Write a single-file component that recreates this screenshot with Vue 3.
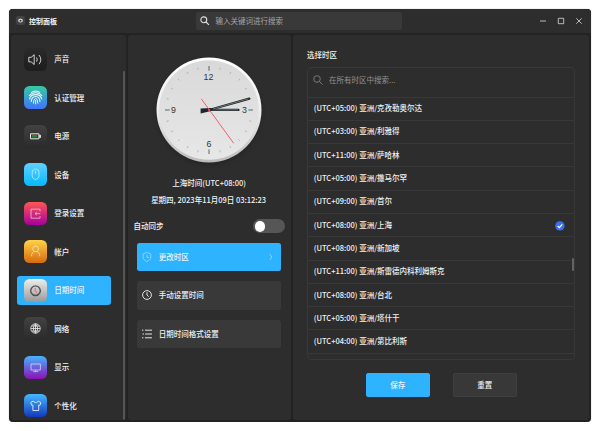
<script setup>
const menu = [
  { label: '声音', tone: 'black', parts: [
    { d: 'M4.8 9.3h2.4l3-2.6v9.8l-3-2.6H4.8z' }, { d: 'M12.6 9.5q1.2 2.1 0 4.2' }, { d: 'M15 7q3.6 4.6 0 9.2' } ] },
  { label: '认证管理', tone: 'teal', parts: [
    { d: 'M7 6.6q4.6-3.3 9.2 0', width: 1.1 }, { d: 'M5 10q2.6-3.4 6.6-3.3t6.5 3.3', width: 1.1 },
    { d: 'M5.5 13.4q.8-4.8 6.1-4.8 5.2 0 6.2 4.8', width: 1.1 }, { d: 'M7.2 16q.2-5.5 4.4-5.5t4.4 5.5', width: 1.1 },
    { d: 'M9.3 17.6q.3-5.2 2.3-5.2t2.3 5.2', width: 1 }, { d: 'M11.6 14v4.3', width: 1 } ] },
  { label: '电源', tone: 'gray', parts: [
    { d: 'M6.5 8.8h8.4v5H6.5z', width: 1 }, { d: 'M15.6 10.2h.9v2.3h-.9z', fill: '#fff' }, { d: 'M7.9 10h5.2v2.6H7.9z', fill: '#2f8d2f', stroke: 'none' } ] },
  { label: '设备', tone: 'cyan', parts: [
    { d: 'M8.2 9.8c0-5 6.8-5 6.8 0v2.8c0 5-6.8 5-6.8 0z' }, { d: 'M11.6 7.8v3' } ] },
  { label: '登录设置', tone: 'magenta', parts: [
    { d: 'M16 9.4V7.2H7v9h9v-2.1' }, { d: 'M16.3 11.7H11M12.7 10.2 11 11.7l1.7 1.5' } ] },
  { label: '帐户', tone: 'amber', parts: [
    { d: 'M11.6 6.1a2.8 2.8 0 1 0 .01 0' }, { d: 'M7.5 16.3c0-3 1.6-4.5 3-4.8M15.8 16.3c0-3-1.6-4.5-3-4.8' } ] },
  { label: '日期时间', tone: 'silver', active: true, parts: [
    { d: 'M11.5 6.9a4.8 4.8 0 1 0 .01 0', stroke: '#444', width: 1.4 }, { d: 'M11.2 8.8v3.1l2 1.9', stroke: '#e35462', width: 1 } ] },
  { label: '网络', tone: 'gray', parts: [
    { d: 'M11.5 6.8a4.7 4.7 0 1 0 .01 0M11.5 6.8q-4.5 4.7 0 9.4 4.5-4.7 0-9.4M11.5 6.8v9.4M6.8 11.5h9.4M7.6 9h7.8M7.6 14h7.8', width: .85 } ] },
  { label: '显示', tone: 'violet', parts: [
    { d: 'M7 8h9.4v6H7zM11.7 14v1.6M9.3 15.6h4.8' } ] },
  { label: '个性化', tone: 'blue', parts: [
    { d: 'M9.3 7 6.8 8.5l.8 2.8 1.3-.3v5.5h5.8V11l1.3.3.8-2.8L14.3 7c-1 2-4 2-5 0z' } ] }
]
const zones = [
  ['+05:00', '克孜勒奥尔达'], ['+03:00', '利雅得'], ['+11:00', '萨哈林'], ['+05:00', '撒马尔罕'],
  ['+09:00', '首尔'], ['+08:00', '上海'], ['+08:00', '新加坡'], ['+11:00', '斯雷德内科利姆斯克'],
  ['+08:00', '台北'], ['+05:00', '塔什干'], ['+04:00', '第比利斯']
]
const ticks = Array.from({ length: 24 }, (_, i) => i * 15).filter(a => a % 90 !== 0)
</script>

<template>
  <main class="window">
    <header>
      <span class="logo"><svg viewBox="0 0 9 9"><path d="M4.5 2.4 6.7 3.5v2L4.5 6.7 2.3 5.5v-2z" fill="#ddd"/><circle cx="4.5" cy="4.8" r="1" fill="#333"/></svg></span>
      <b class="name">控制面板</b>
      <div class="search">
        <svg viewBox="0 0 10 10"><circle cx="4" cy="4" r="3.1"/><path d="m6.3 6.3 3.1 3.1"/></svg>
        <span>输入关键词进行搜索</span>
      </div>
      <div class="controls">
        <svg viewBox="0 0 8 8"><path d="M1 4h6"/></svg>
        <svg viewBox="0 0 8 8"><path d="M1.3 1.3h5.4v5.4H1.3z"/></svg>
        <svg viewBox="0 0 8 8"><path d="m1.3 1.3 5.4 5.4m0-5.4L1.3 6.7"/></svg>
      </div>
    </header>
    <div class="panels">
      <nav class="panel side">
        <div class="menu">
          <div v-for="m in menu" :key="m.label" class="item" :class="{ active: m.active }">
            <span class="tile" :class="m.tone">
              <svg viewBox="0 0 23 23"><path v-for="(p, i) in m.parts" :key="i" :d="p.d" :fill="p.fill || 'none'" :stroke="p.stroke || '#fff'" :stroke-width="p.width || .9"/></svg>
            </span>
            <span>{{ m.label }}</span>
          </div>
        </div>
        <i class="side-bar"></i>
      </nav>

      <section class="panel middle">
        <svg class="clock" viewBox="-60 -60 120 120">
          <defs>
            <linearGradient id="rim" x1="0" y1="0" x2="0" y2="1"><stop offset="0" stop-color="#fff"/><stop offset=".5" stop-color="#eee"/><stop offset="1" stop-color="#bbb"/></linearGradient>
            <linearGradient id="face" x1="0" y1="0" x2="0" y2="1"><stop offset="0" stop-color="#d9d9d9"/><stop offset="1" stop-color="#e7e7e7"/></linearGradient>
          </defs>
          <circle class="disc" r="52.5" fill="url(#rim)"/>
          <circle r="49.8" fill="url(#face)"/>
          <path v-for="a in ticks" :key="a" d="M0-43.8v2" :transform="`rotate(${a})`" stroke="#aaa" stroke-width=".8"/>
          <path d="M0-44v4.7M0 44v-4.7M-44 0h4.7M44 0h-4.7" stroke="#555" stroke-width=".9"/>
          <g class="numerals"><text x="-.6" y="-30.5">12</text><text x="35.5" y="3.1">3</text><text x="0" y="37.4">6</text><text x="-35.6" y="3.1">9</text></g>
          <path d="M0-.1 29.5-.1" class="hand"/><path d="M0-.1h29" class="core"/>
          <path d="M0 0 40.3-11.4" class="hand"/><path d="m4-1.1 35.5-10.1" class="core"/>
          <path d="m2-2-10.4.5v5L2 1z" fill="#1e272c"/>
          <path d="m-7.7-11.2 32.4 44.5" stroke="#f04f68" stroke-width=".9"/>
          <circle r="1.1" fill="#f24d66"/>
        </svg>
        <p class="zone-name">上海时间(UTC+08:00)</p>
        <p class="date">星期四, 2023年11月09日 03:12:23</p>
        <div class="sync"><span>自动同步</span><span class="toggle"><i></i></span></div>
        <div class="options">
          <div class="option on">
            <svg viewBox="0 0 10 10"><path d="M5 .5 8.8 1.9v3.3c0 2-1.7 3.4-3.8 4.3C2.9 8.6 1.2 7.2 1.2 5.2V1.9zM5 2.9v2.5h2"/></svg>
            <span>更改时区</span>
            <svg class="chevron" viewBox="0 0 4 8"><path d="M.8 1 2.8 4 .8 7"/></svg>
          </div>
          <div class="option">
            <svg viewBox="0 0 10 10"><circle cx="5" cy="5" r="4.4"/><path d="M5 2.2V5l1.6 1.7"/></svg>
            <span>手动设置时间</span>
          </div>
          <div class="option">
            <svg viewBox="0 0 10 10"><path d="M0 1.2h1.4M3 1.2h7M.6 5H2m1.2 0H10M0 8.8h1.4M3 8.8h7"/></svg>
            <span>日期时间格式设置</span>
          </div>
        </div>
      </section>

      <section class="panel right">
        <h2>选择时区</h2>
        <div class="list">
          <div class="filter"><svg viewBox="0 0 10 10"><circle cx="4" cy="4" r="3.3"/><path d="m6.4 6.4 3.2 3.2"/></svg><span>在所有时区中搜索...</span></div>
          <div v-for="z in zones" :key="z[1]" class="zone">
            <span>(UTC{{ z[0] }}) 亚洲/{{ z[1] }}</span>
            <svg v-if="z[1] === '上海'" viewBox="0 0 10 10"><circle cx="5" cy="5" r="4.8" fill="#3b70ec"/><path d="m2.7 5.1 1.7 1.7 3-3.3" fill="none" stroke="#fff" stroke-width="1.2"/></svg>
          </div>
          <i class="list-bar"></i>
        </div>
        <div class="actions"><button class="save">保存</button><button>重置</button></div>
      </section>
    </div>
  </main>
</template>

<style>
body { margin: 0; background: #fff; }
</style>
<style scoped>
* { box-sizing: border-box; }
.window { margin: 9px 0 0 8.6px; width: 582.6px; height: 413px; overflow: hidden; display: flex; flex-direction: column; border-radius: 4px; background: #232323; color: #f2f2f2; font: 500 7.5px/12px "Noto Sans CJK SC", sans-serif; box-shadow: 0 0 1px #777; white-space: nowrap; }
svg { display: block; fill: none; flex: none; }
header { height: 23.5px; flex: none; display: flex; align-items: center; background: #2d2d2d; padding-left: 7.4px; }
.logo { width: 9px; height: 9px; border-radius: 2px; background: #424242; }
.name { width: 161px; margin-left: 4px; font-size: 7px; font-weight: 700; }
.search { margin-left: 6.2px; width: 205.5px; height: 17.5px; border-radius: 2px; background: #393939; display: flex; align-items: center; padding-left: 4px; color: #a6a6a6; font-weight: 400; }
.search svg { width: 9.5px; height: 9.5px; margin-right: 5.8px; stroke: #ddd; stroke-width: 1.2; }
.controls { display: flex; gap: 10px; margin-left: 137px; }
.controls svg { width: 8px; height: 8px; stroke: #bbb; stroke-width: 1; }
.panels { flex: 1; display: flex; gap: 2px; padding: 2px; min-height: 0; }
.panel { background: #2d2d2d; border-radius: 3px; overflow: hidden; }
.side { width: 115px; display: flex; justify-content: space-between; }
.menu { width: 100.4px; padding: 10.3px 0 0 6.2px; display: flex; flex-direction: column; gap: 9.5px; }
.item { height: 29px; flex: none; display: flex; align-items: center; gap: 7.5px; padding-left: 7px; border-radius: 3px; }
.item.active { background: #2db3ff; }
.tile { width: 23px; height: 23px; border-radius: 5.5px; }
.tile svg { width: 23px; height: 23px; opacity: .88; }
.black { background: linear-gradient(#2a2a2a, #1d1d1d); }
.gray { background: linear-gradient(#424242, #2a2a2a); }
.teal { background: linear-gradient(#35cba0, #3f74ff); }
.cyan { background: linear-gradient(#60d1ff, #05b9ff); }
.magenta { background: linear-gradient(#ff5652, #a6009d); }
.amber { background: linear-gradient(#ffd348, #d66a0c); }
.silver { background: linear-gradient(#eee, #999); }
.violet { background: linear-gradient(#46b3ff, #8e10b5); }
.blue { background: linear-gradient(#44b8ff, #1439bd); }
.cyan svg, .magenta svg, .amber svg, .violet svg { opacity: .65; }
.side-bar { width: 2.5px; height: 349px; margin: 36px .5px 0 0; border-radius: 1px; background: #555; }
.middle { width: 163px; display: flex; flex-direction: column; }
.clock { width: 120px; height: 120px; margin: 15.5px 0 0 21.4px; }
.disc { filter: drop-shadow(0 2px 2px #1115); }
.numerals { font: 8.8px "Liberation Sans", sans-serif; fill: #333; text-anchor: middle; }
.hand { stroke: #1c2327; stroke-width: 2.2; stroke-linecap: round; }
.core { stroke: #8d969b; stroke-width: .7; }
p { margin: 0; text-align: center; }
.zone-name { margin-top: 6.5px; }
.date { margin-top: 5px; margin-right: 1px; }
.sync { display: flex; align-items: center; justify-content: space-between; margin-top: 13.5px; padding: 0 6px; height: 14.5px; }
.toggle { width: 31.5px; height: 14px; border-radius: 7px; background: #565656; padding: 1.5px; }
.toggle i { display: block; width: 10.8px; height: 10.8px; border-radius: 50%; background: #fff; }
.options { display: flex; flex-direction: column; gap: 10px; margin: 9px 10px 0 9px; }
.option { height: 28.5px; border-radius: 2.5px; background: #393939; display: flex; align-items: center; padding: 0 8px 0 5.5px; }
.option svg { width: 10px; height: 10px; stroke: #e4e4e4; stroke-width: 1; margin-right: 6.7px; }
.option.on { background: #2db3ff; }
.option.on svg { stroke: #a4ddff; stroke-width: .8; }
.option .chevron { width: 4px; height: 8px; margin: 0 0 0 auto; }
.right { flex: 1; padding: 14.5px 14px 0; }
h2 { font: inherit; margin: 0 0 0 .4px; }
.list { position: relative; margin-top: 5.5px; width: 268.5px; height: 293px; border: 1px solid #383838; border-radius: 4px; }
.filter { height: 30px; border-bottom: 1px solid #383838; display: flex; align-items: center; padding: 0 0 4px 5px; color: #929292; font-weight: 400; }
.filter svg { width: 10px; height: 10px; stroke: #777; margin-right: 6.5px; }
.zone { height: 23.3px; border-bottom: 1px solid #383838; display: flex; align-items: center; justify-content: space-between; padding: 0 9.5px 1px 6.2px; }
.zone svg { width: 9.8px; height: 9.8px; margin-top: 3px; }
.list-bar { position: absolute; right: 0; top: 190.5px; width: 2.5px; height: 13px; border-radius: 1px; background: #626262; }
.actions { display: flex; gap: 22.5px; padding: 13.5px 0 0 59px; }
button { width: 64.5px; height: 24px; padding: 0; border: 1px solid #404040; border-radius: 2px; background: #383838; color: inherit; font: inherit; }
button.save { background: #2db3ff; border-color: #2db3ff; }
</style>
